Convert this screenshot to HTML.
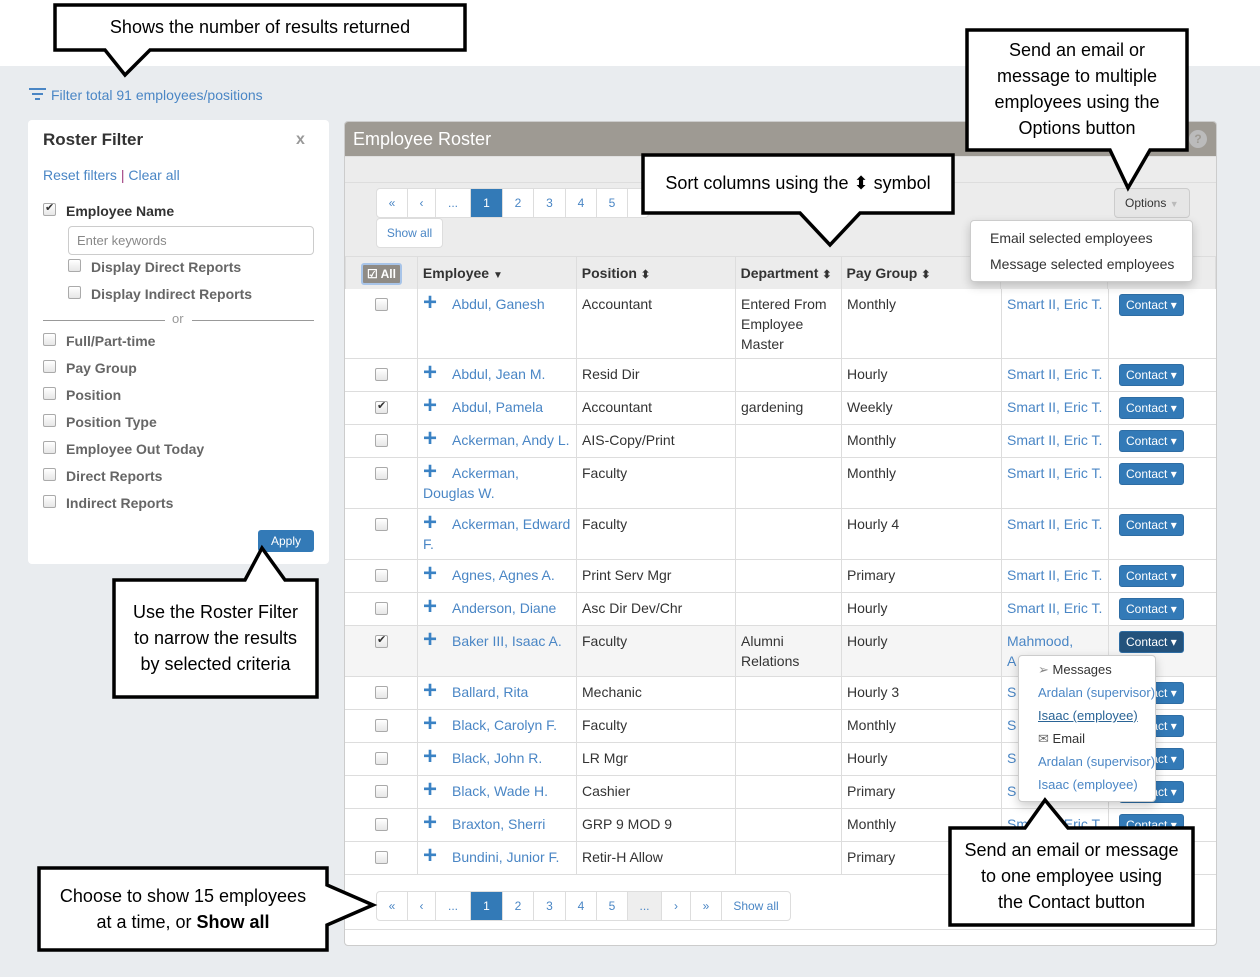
<!DOCTYPE html>
<html><head><meta charset="utf-8">
<style>
*{box-sizing:border-box;margin:0;padding:0}
body{width:1260px;height:977px;position:relative;overflow:hidden;background:#e9ecef;font-family:"Liberation Sans",Arial,sans-serif;font-size:14px;color:#333}
.a{position:absolute}
.lnk{color:#4a86c5}
.cb{position:absolute;width:13px;height:13px;border:1px solid #aaa;border-radius:2px;background:linear-gradient(#fff,#e6e6e6)}
.cb.on::after{content:"✔";position:absolute;left:1px;top:-3px;font-size:11px;color:#333}
.fl{position:absolute;left:66px;font-weight:bold;color:#666;font-size:14px}
table{border-collapse:collapse;position:absolute;left:345px;top:256px;width:871px;font-size:14px}
td,th{border:1px solid #ddd;vertical-align:top;padding:7px 5px;line-height:20px;text-align:left}
th{background:#ececec;font-weight:bold;height:33px;padding:6px 5px}
.plus{color:#3a82c4;font-weight:bold;font-size:24px;display:inline-block;width:29px;line-height:18px;vertical-align:top}
.btn{display:inline-block;background:#337ab7;color:#fff;font-size:12px;padding:2px 6px;border-radius:3px;line-height:16px;margin-left:5px;border:1px solid #2e6da4}
.btn.dk{background:#23527c}
.pg{position:absolute;display:flex;border:1px solid #ddd;border-radius:4px;background:#fff;height:30px}
.pg span{display:block;border-right:1px solid #ddd;color:#4a86c5;font-size:12px;text-align:center;line-height:28px}
.pg span:last-child{border-right:none}
.pg .ac{background:#337ab7;color:#fff}
.co{position:absolute;font-family:"Liberation Sans",sans-serif;font-size:18px;color:#000;text-align:center;line-height:26px;white-space:nowrap}
.dd{position:absolute;background:#fff;border:1px solid #ccc;border-radius:4px;box-shadow:0 4px 10px rgba(0,0,0,.2)}
.di{position:absolute;left:1038px;font-size:13px;white-space:nowrap}
</style></head><body>
<div class="a" style="left:0;top:0;width:1260px;height:66px;background:#fff"></div>

<svg class="a" style="left:28px;top:87px" width="20" height="16"><path d="M1 2h17M4 7h11M7 12h5" stroke="#4a86c5" stroke-width="2"/></svg>
<div class="a lnk" style="left:51px;top:87px;font-size:14px">Filter total 91 employees/positions</div>

<div class="a" style="left:28px;top:120px;width:301px;height:444px;background:#fff;border-radius:4px"></div>
<div class="a" style="left:43px;top:130px;font-size:17px;font-weight:bold">Roster Filter</div>
<div class="a" style="left:296px;top:131px;font-size:16px;color:#999;font-weight:bold">x</div>
<div class="a" style="left:43px;top:167px"><span class="lnk">Reset filters</span> <span style="color:#a04080">|</span> <span class="lnk">Clear all</span></div>
<div class="cb on" style="left:43px;top:203px"></div>
<div class="a" style="left:66px;top:203px;font-weight:bold;color:#333">Employee Name</div>
<div class="a" style="left:68px;top:226px;width:246px;height:29px;border:1px solid #ccc;border-radius:4px;padding:6px 8px;color:#888;font-size:13px">Enter keywords</div>
<div class="cb" style="left:68px;top:259px"></div><div class="fl" style="left:91px;top:259px">Display Direct Reports</div>
<div class="cb" style="left:68px;top:286px"></div><div class="fl" style="left:91px;top:286px">Display Indirect Reports</div>
<div class="a" style="left:43px;top:320px;width:122px;border-top:1px solid #999"></div>
<div class="a" style="left:172px;top:311px;color:#999;font-size:13px">or</div>
<div class="a" style="left:192px;top:320px;width:122px;border-top:1px solid #999"></div>
<div class="cb" style="left:43px;top:333px"></div><div class="fl" style="top:333px">Full/Part-time</div>
<div class="cb" style="left:43px;top:360px"></div><div class="fl" style="top:360px">Pay Group</div>
<div class="cb" style="left:43px;top:387px"></div><div class="fl" style="top:387px">Position</div>
<div class="cb" style="left:43px;top:414px"></div><div class="fl" style="top:414px">Position Type</div>
<div class="cb" style="left:43px;top:441px"></div><div class="fl" style="top:441px">Employee Out Today</div>
<div class="cb" style="left:43px;top:468px"></div><div class="fl" style="top:468px">Direct Reports</div>
<div class="cb" style="left:43px;top:495px"></div><div class="fl" style="top:495px">Indirect Reports</div>
<div class="a" style="left:258px;top:530px;width:56px;height:22px;background:#337ab7;border-radius:3px;color:#fff;font-size:12px;text-align:center;line-height:22px">Apply</div>

<div class="a" style="left:344px;top:121px;width:873px;height:825px;background:#fff;border:1px solid #ccc;border-radius:4px"></div>
<div class="a" style="left:345px;top:122px;width:871px;height:34px;background:#9e9a93;border-radius:3px 3px 0 0"></div>
<div class="a" style="left:353px;top:129px;color:#fff;font-size:18px">Employee Roster</div>
<div class="a" style="left:1189px;top:130px;width:18px;height:18px;border-radius:50%;background:#bbb;color:#9e9a93;font-size:12px;text-align:center;line-height:18px;font-weight:bold">?</div>
<div class="a" style="left:345px;top:156px;width:871px;height:100px;background:#ececec;border-top:1px solid #e0e0e0"></div>
<div class="a" style="left:345px;top:182px;width:871px;border-top:1px solid #ddd"></div>
<div class="pg" style="left:376px;top:188px"><span style="width:31px">«</span><span style="width:28px">‹</span><span style="width:35px">...</span><span class="ac" style="width:32px">1</span><span style="width:31px">2</span><span style="width:32px">3</span><span style="width:31px">4</span><span style="width:31px">5</span><span style="width:20px"></span></div>
<div class="pg" style="left:376px;top:218px;width:67px"><span style="width:67px">Show all</span></div>
<div class="a" style="left:1114px;top:188px;width:76px;height:30px;background:#e6e6e6;border:1px solid #ccc;border-radius:4px;font-size:12px;line-height:28px;padding-left:10px">Options <span style="color:#bbb;font-size:9px">▼</span></div>

<table>
<tr><th style="width:72px;text-align:center"><span style="display:inline-block;background:#8f8b85;color:#fff;border:2px solid #a8c4e8;border-radius:3px;font-size:12px;padding:0 4px;line-height:18px">☑ All</span></th>
<th style="width:159px">Employee <span style="font-size:10px">▼</span></th>
<th style="width:159px">Position <span style="font-size:11px">⬍</span></th>
<th style="width:106px">Department <span style="font-size:11px">⬍</span></th>
<th style="width:160px">Pay Group <span style="font-size:11px">⬍</span></th>
<th style="width:107px"></th><th style="width:108px"></th></tr>
</table>
<div id="rows"></div>

<div class="pg" style="left:376px;top:891px"><span style="width:31px">«</span><span style="width:28px">‹</span><span style="width:35px">...</span><span class="ac" style="width:32px">1</span><span style="width:31px">2</span><span style="width:32px">3</span><span style="width:31px">4</span><span style="width:31px">5</span><span style="width:34px;background:#eee">...</span><span style="width:29px">›</span><span style="width:31px">»</span><span style="width:68px">Show all</span></div>
<div class="a" style="left:345px;top:929px;width:871px;border-top:1px solid #ddd"></div>

<div class="dd" style="left:970px;top:220px;width:223px;height:62px"></div>
<div class="a" style="left:990px;top:230px;font-size:14px">Email selected employees</div>
<div class="a" style="left:990px;top:256px;font-size:14px">Message selected employees</div>

<div class="dd" style="left:1018px;top:655px;width:138px;height:147px"></div>
<div class="di" style="top:662px"><span style="color:#888">➢</span> Messages</div>
<div class="di lnk" style="top:685px">Ardalan (supervisor)</div>
<div class="di" style="top:708px;text-decoration:underline;color:#2a6496">Isaac (employee)</div>
<div class="di" style="top:731px"><span style="color:#666">✉</span> Email</div>
<div class="di lnk" style="top:754px">Ardalan (supervisor)</div>
<div class="di lnk" style="top:777px">Isaac (employee)</div>

<svg class="a" style="left:0;top:0" width="1260" height="977">
<g fill="#fff" stroke="#000" stroke-width="3.5" stroke-linejoin="miter">
<path d="M55 5H465V50H150L125 75L105 50H55Z"/>
<path d="M967 30H1187V150H1150L1128 188L1110 150H967Z"/>
<path d="M643 155H953V213H860L830 245L800 213H643Z"/>
<path d="M114 580H245L262 548L285 580H317V697H114Z"/>
<path d="M39 868H327V885L373 905L327 925V950H39Z"/>
<path d="M950 828H1025L1045 800L1068 828H1193V925H950Z"/>
</g></svg>
<div class="co" style="left:55px;top:14px;width:410px">Shows the number of results returned</div>
<div class="co" style="left:967px;top:37px;width:220px">Send an email or<br>message to multiple<br>employees using the<br>Options button</div>
<div class="co" style="left:643px;top:170px;width:310px">Sort columns using the ⬍ symbol</div>
<div class="co" style="left:114px;top:599px;width:203px">Use the Roster Filter<br>to narrow the results<br>by selected criteria</div>
<div class="co" style="left:39px;top:883px;width:288px">Choose to show 15 employees<br>at a time, or <b>Show all</b></div>
<div class="co" style="left:950px;top:837px;width:243px">Send an email or message<br>to one employee using<br>the Contact button</div>

<script>
const R=[["Abdul, Ganesh","","Accountant","Entered From Employee Master","Monthly",70,0,"Smart II, Eric T."],
["Abdul, Jean M.","","Resid Dir","","Hourly",33,0],
["Abdul, Pamela","","Accountant","gardening","Weekly",33,1],
["Ackerman, Andy L.","","AIS-Copy/Print","","Monthly",33,0],
["Ackerman,","Douglas W.","Faculty","","Monthly",51,0],
["Ackerman, Edward","F.","Faculty","","Hourly 4",51,0],
["Agnes, Agnes A.","","Print Serv Mgr","","Primary",33,0],
["Anderson, Diane","","Asc Dir Dev/Chr","","Hourly",33,0],
["Baker III, Isaac A.","","Faculty","Alumni Relations","Hourly",51,1,"Mahmood, A",1],
["Ballard, Rita","","Mechanic","","Hourly 3",33,0,"S"],
["Black, Carolyn F.","","Faculty","","Monthly",33,0,"S"],
["Black, John R.","","LR Mgr","","Hourly",33,0,"S"],
["Black, Wade H.","","Cashier","","Primary",33,0,"S"],
["Braxton, Sherri","","GRP 9 MOD 9","","Monthly",33,0,"Smart II, Eric T."],
["Bundini, Junior F.","","Retir-H Allow","","Primary",33,0,""]];
let y=289,h='';
const xs=[345,417,576,735,841,1001,1108,1216];
R.forEach(r=>{
 const H=r[5],bg=r[8]?'#f5f5f5':'#fff';
 h+=`<div class="a" style="left:345px;top:${y}px;width:871px;height:${H}px;background:${bg};border-bottom:1px solid #ddd"></div>`;
 for(let i=1;i<7;i++)h+=`<div class="a" style="left:${xs[i]}px;top:${y}px;height:${H}px;border-left:1px solid #ddd"></div>`;
 h+=`<div class="cb ${r[6]?'on':''}" style="left:375px;top:${y+9}px"></div>`;
 h+=`<div class="a" style="left:423px;top:${y+5}px;width:150px;line-height:20px"><span class="plus">+</span><span class="lnk">${r[0]}</span>${r[1]?'<br><span class="lnk">'+r[1]+'</span>':''}</div>`;
 h+=`<div class="a" style="left:582px;top:${y+5}px;line-height:20px">${r[2]}</div>`;
 h+=`<div class="a" style="left:741px;top:${y+5}px;width:95px;line-height:20px">${r[3]}</div>`;
 h+=`<div class="a" style="left:847px;top:${y+5}px;line-height:20px">${r[4]}</div>`;
 let s=r[7]===undefined?"Smart II, Eric T.":r[7];
 if(s==="Mahmood, A")s="Mahmood,<br>A";
 h+=`<div class="a lnk" style="left:1007px;top:${y+5}px;width:100px;line-height:20px;overflow:hidden;white-space:nowrap">${s}</div>`;
 h+=`<div class="a" style="left:1114px;top:${y+5}px"><span class="btn ${r[8]?'dk':''}">Contact ▾</span></div>`;
 y+=H;});
document.getElementById('rows').innerHTML=h;
</script>
</body></html>
